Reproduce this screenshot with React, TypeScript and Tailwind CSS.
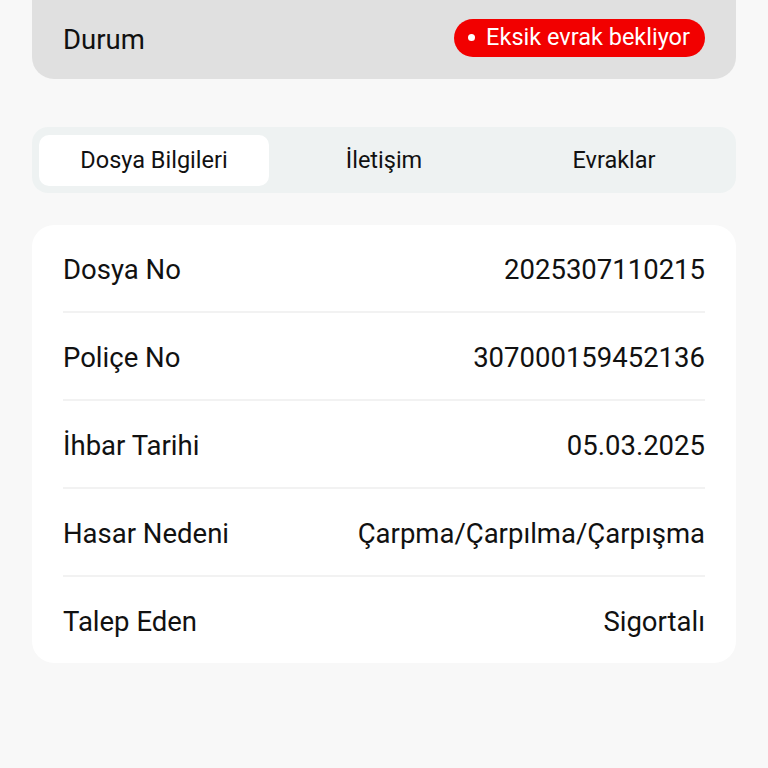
import React from "react";

// ── Data ──────────────────────────────────────────────────────────────────────

const rows: { label: string; value: string }[] = [
  { label: "Dosya No", value: "2025307110215" },
  { label: "Poliçe No", value: "307000159452136" },
  { label: "İhbar Tarihi", value: "05.03.2025" },
  { label: "Hasar Nedeni", value: "Çarpma/Çarpılma/Çarpışma" },
  { label: "Talep Eden", value: "Sigortalı" },
];

const tabs = ["Dosya Bilgileri", "İletişim", "Evraklar"];

// ── Pieces ────────────────────────────────────────────────────────────────────

function StatusCard() {
  return (
    <div className="h-[79px] mx-[32px] bg-[#e0e0e0] rounded-b-[22px] flex items-center justify-between px-[31px]">
      <span className="text-[27.5px] text-[#111]">Durum</span>
      <span className="mb-[4px] h-[38px] flex items-center gap-[11px] pl-[14px] pr-[15px] rounded-full bg-[#f20000] text-white text-[23.5px]">
        <span className="w-[7px] h-[7px] rounded-full bg-white" />
        Eksik evrak bekliyor
      </span>
    </div>
  );
}

function Tabs() {
  return (
    <div className="mx-[32px] mt-[48px] h-[66px] bg-[#eef2f2] rounded-[16px] px-[7px] pt-[8px] pb-[7px] grid grid-cols-3">
      {tabs.map((t, i) => (
        <div
          key={t}
          className={
            "flex items-center justify-center rounded-[10px] text-[23.5px] text-[#111] " +
            (i === 0 ? "bg-white" : "")
          }
        >
          {t}
        </div>
      ))}
    </div>
  );
}

function InfoCard() {
  return (
    <div className="mx-[32px] mt-[32px] bg-white rounded-[22px] px-[31px]">
      {rows.map((r, i) => (
        <div key={r.label}>
          {i > 0 && <div className="h-[2px] bg-[#f2f2f2]" />}
          <div className="h-[86px] pt-[3px] flex items-center justify-between text-[27.5px] text-[#111]">
            <span>{r.label}</span>
            <span>{r.value}</span>
          </div>
        </div>
      ))}
    </div>
  );
}

// ── Page ──────────────────────────────────────────────────────────────────────

export default function App() {
  return (
    <div className="w-[768px] h-[768px] bg-[#f8f8f8] overflow-hidden font-['Roboto',sans-serif]">
      <StatusCard />
      <Tabs />
      <InfoCard />
    </div>
  );
}
